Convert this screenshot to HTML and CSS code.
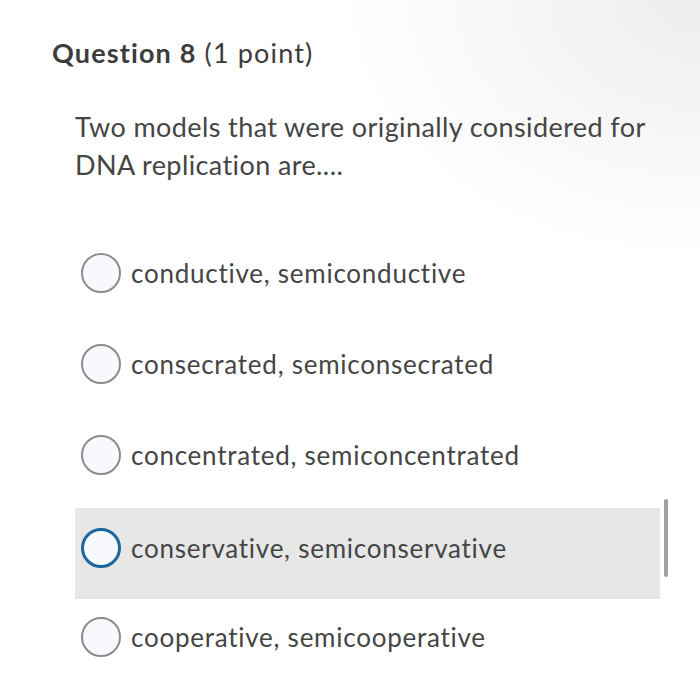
FILE: index.html
```html
<!DOCTYPE html>
<html lang="en">
<head>
<meta charset="utf-8">
<title>Question 8</title>
<link rel="stylesheet" href="styles.css">
</head>
<body>
<main class="page">
  <h1 class="title"><strong>Question 8</strong> (1 point)</h1>
  <p class="prompt">Two models that were originally considered for DNA replication are....</p>
  <div class="options">
    <label class="option"><span class="radio"></span><span class="label">conductive, semiconductive</span></label>
    <label class="option"><span class="radio"></span><span class="label">consecrated, semiconsecrated</span></label>
    <label class="option"><span class="radio"></span><span class="label">concentrated, semiconcentrated</span></label>
    <label class="option focused"><span class="radio"></span><span class="label">conservative, semiconservative</span><span class="scrollbar"></span></label>
    <label class="option"><span class="radio"></span><span class="label">cooperative, semicooperative</span></label>
  </div>
</main>
</body>
</html>
```
FILE: styles.css
```css
html, body {
  margin: 0;
  padding: 0;
}
body {
  width: 700px;
  height: 689px;
  overflow: hidden;
  font-family: Lato, "Open Sans", sans-serif;
  color: #454545;
  background:
    radial-gradient(ellipse 360px 260px at 100% 0%, rgba(0,0,0,0.07), rgba(0,0,0,0) 100%),
    #ffffff;
}
.page {
  padding: 36px 0 0 52px;
}
.title {
  margin: 0;
  font-size: 27px;
  font-weight: 400;
  line-height: 34px;
  letter-spacing: 1.15px;
  color: #3c3c3c;
}
.title strong {
  font-weight: 700;
}
.prompt {
  margin: 38px 0 0 23px;
  width: 600px;
  font-size: 27px;
  line-height: 38px;
  letter-spacing: 0.4px;
}
.options {
  margin: 51px 0 0 23px;
  width: 585px;
}
.option {
  position: relative;
  display: flex;
  align-items: center;
  height: 91px;
  padding: 0 0 16px 6px;
  box-sizing: border-box;
}
.option.focused {
  background: #e7e7e7;
  padding-bottom: 11px;
}
.radio {
  flex: none;
  width: 40px;
  height: 40px;
  box-sizing: border-box;
  border: 2px solid #8c8c8c;
  border-radius: 50%;
  background: #f8f9fc;
}
.focused .radio {
  border: 3.5px solid #1d679f;
}
.label {
  margin-left: 10px;
  font-size: 26px;
  line-height: 30px;
  letter-spacing: 0.75px;
}
.scrollbar {
  position: absolute;
  right: -8px;
  top: -9px;
  width: 4px;
  height: 78px;
  border-radius: 2px;
  background: #a0a0a0;
}
```
